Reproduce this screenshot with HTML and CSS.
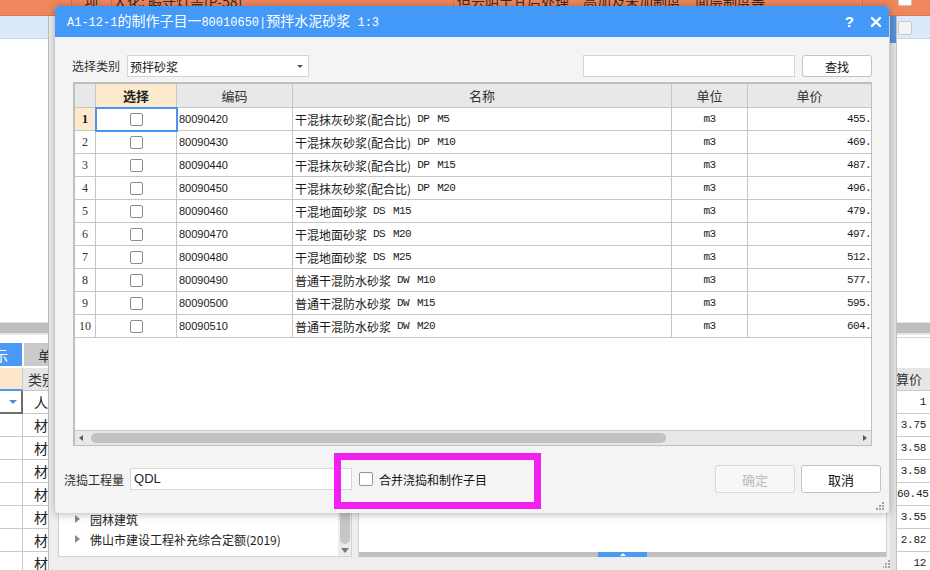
FILE: index.html
```html
<!DOCTYPE html>
<html lang="zh-CN">
<head>
<meta charset="utf-8">
<title>制作子目</title>
<link rel="stylesheet" href="styles.css">
</head>
<body>
<div class="app">
  <div class="pane-left">
    <div class="orow"></div>
    <div class="brow"></div>
    <div class="fill"></div>
    <div class="splitter"></div>
    <div class="gap8"></div>
    <div class="tabs">
      <div class="tab active"><span class="tabtxt cut">示</span></div>
      <div class="tab"><span class="tabtxt">单</span></div>
    </div>
    <div class="gap2"></div>
    <div class="lgrid">
      <div class="lc hsel"></div><div class="lc lhd">类别</div>
      <div class="lc dd"><span class="caret"></span></div><div class="lc">人</div>
      <div class="lc"></div><div class="lc">材</div>
      <div class="lc"></div><div class="lc">材</div>
      <div class="lc"></div><div class="lc">材</div>
      <div class="lc"></div><div class="lc">材</div>
      <div class="lc"></div><div class="lc">材</div>
      <div class="lc"></div><div class="lc">材</div>
      <div class="lc"></div><div class="lc">材</div>
    </div>
  </div>

  <div class="pane-mid">
    <div class="orow">
      <div class="ocell w24"></div>
      <div class="ocell w40 ctr"><span class="otext">项</span></div>
      <div class="ocell w342"><span class="otext">大化: 暇守灯盖(P-58)</span></div>
      <div class="ocell w409"><span class="otext">但云阴土甘后处理　高加及未加制度　面层制度等</span></div>
      <div class="ocell rest"></div>
    </div>
    <div class="mid-body">
      <div class="mfill"></div>
      <div class="mbottom">
        <div class="tree">
          <div class="tree-list">
            <div class="ti"><span class="tri"></span>园林建筑</div>
            <div class="ti"><span class="tri"></span>佛山市建设工程补充综合定额(2019)</div>
          </div>
          <div class="vscroll"><div class="vthumb"></div><div class="varrow"></div></div>
        </div>
        <div class="detail">
          <div class="dfill"></div>
          <div class="hbar"><div class="hbar-blue"><span class="uptri"></span></div></div>
        </div>
      </div>
      <div class="mfoot">
        <svg class="bgrip" width="7" height="8" viewBox="0 0 7 8"><rect x="5" y="0" width="2" height="2" fill="#a8a8a8"/><rect x="2" y="3" width="2" height="2" fill="#a8a8a8"/><rect x="5" y="3" width="2" height="2" fill="#a8a8a8"/><rect x="-1" y="6" width="2" height="2" fill="#a8a8a8"/><rect x="2" y="6" width="2" height="2" fill="#a8a8a8"/><rect x="5" y="6" width="2" height="2" fill="#a8a8a8"/></svg>
      </div>
    </div>
  </div>

  <div class="pane-right">
    <div class="orow rorow"><span class="ocb"></span></div>
    <div class="rbody">
      <div class="rframe"><div class="rblue"></div></div>
      <div class="rcontent">
        <div class="brow rbrow"><span class="rcb"></span></div>
        <div class="fill"></div>
        <div class="splitter"></div>
        <div class="rgap"></div>
        <div class="rgrid">
          <div class="rc rhd">预算价</div>
          <div class="rc">1</div>
          <div class="rc">3.75</div>
          <div class="rc">3.58</div>
          <div class="rc">3.58</div>
          <div class="rc">60.45</div>
          <div class="rc">3.55</div>
          <div class="rc">2.82</div>
          <div class="rc">12</div>
        </div>
      </div>
    </div>
  </div>
</div>

<div class="dialog">
  <div class="titlebar">
    <div class="title"><span class="tl">A1-12-1</span>的制作子目一<span class="tl">80010650|</span>预拌水泥砂浆<span class="tl"> 1:3</span></div>
    <div class="tbtns">
      <span class="help">?</span>
      <svg class="close" width="10" height="10" viewBox="0 0 10 10"><path d="M1 1 L9 9 M9 1 L1 9" stroke="#fff" stroke-width="2.4" stroke-linecap="square"/></svg>
    </div>
  </div>
  <div class="dbody">
    <div class="filter">
      <div class="fgroup">
        <span class="flabel">选择类别</span>
        <div class="select"><span>预拌砂浆</span><i class="sarrow"></i></div>
      </div>
      <div class="fgroup">
        <div class="search"></div>
        <div class="btn find">查找</div>
      </div>
    </div>

    <div class="grid">
      <div class="gtable">
        <div class="gc gh"></div>
        <div class="gc gh hsel2">选择</div>
        <div class="gc gh">编码</div>
        <div class="gc gh">名称</div>
        <div class="gc gh">单位</div>
        <div class="gc gh last">单价</div>

        <div class="gc rn cur">1</div><div class="gc chk selcell"><span class="cb"></span></div><div class="gc code">80090420</div><div class="gc name">干混抹灰砂浆(配合比)<span class="lat">DP M5</span></div><div class="gc unit">m3</div><div class="gc price last">455.</div>
        <div class="gc rn">2</div><div class="gc chk"><span class="cb"></span></div><div class="gc code">80090430</div><div class="gc name">干混抹灰砂浆(配合比)<span class="lat">DP M10</span></div><div class="gc unit">m3</div><div class="gc price last">469.</div>
        <div class="gc rn">3</div><div class="gc chk"><span class="cb"></span></div><div class="gc code">80090440</div><div class="gc name">干混抹灰砂浆(配合比)<span class="lat">DP M15</span></div><div class="gc unit">m3</div><div class="gc price last">487.</div>
        <div class="gc rn">4</div><div class="gc chk"><span class="cb"></span></div><div class="gc code">80090450</div><div class="gc name">干混抹灰砂浆(配合比)<span class="lat">DP M20</span></div><div class="gc unit">m3</div><div class="gc price last">496.</div>
        <div class="gc rn">5</div><div class="gc chk"><span class="cb"></span></div><div class="gc code">80090460</div><div class="gc name">干混地面砂浆<span class="lat">DS M15</span></div><div class="gc unit">m3</div><div class="gc price last">479.</div>
        <div class="gc rn">6</div><div class="gc chk"><span class="cb"></span></div><div class="gc code">80090470</div><div class="gc name">干混地面砂浆<span class="lat">DS M20</span></div><div class="gc unit">m3</div><div class="gc price last">497.</div>
        <div class="gc rn">7</div><div class="gc chk"><span class="cb"></span></div><div class="gc code">80090480</div><div class="gc name">干混地面砂浆<span class="lat">DS M25</span></div><div class="gc unit">m3</div><div class="gc price last">512.</div>
        <div class="gc rn">8</div><div class="gc chk"><span class="cb"></span></div><div class="gc code">80090490</div><div class="gc name">普通干混防水砂浆<span class="lat">DW M10</span></div><div class="gc unit">m3</div><div class="gc price last">577.</div>
        <div class="gc rn">9</div><div class="gc chk"><span class="cb"></span></div><div class="gc code">80090500</div><div class="gc name">普通干混防水砂浆<span class="lat">DW M15</span></div><div class="gc unit">m3</div><div class="gc price last">595.</div>
        <div class="gc rn">10</div><div class="gc chk"><span class="cb"></span></div><div class="gc code">80090510</div><div class="gc name">普通干混防水砂浆<span class="lat">DW M20</span></div><div class="gc unit">m3</div><div class="gc price last">604.</div>
      </div>
      <div class="gempty"></div>
      <div class="hscroll">
        <span class="larr"></span>
        <div class="hthumb"></div>
        <span class="rarr"></span>
      </div>
    </div>

    <div class="footer">
      <span class="qlabel">浇捣工程量</span>
      <div class="qinput">QDL</div>
      <span class="cb lg"></span>
      <span class="cblabel">合并浇捣和制作子目</span>
      <div class="spacer"></div>
      <div class="btn big disabled">确定</div>
      <div class="btn big">取消</div>
    </div>
    <svg class="grip" width="8" height="8" viewBox="0 0 8 8"><rect x="6" y="0" width="2" height="2" fill="#a0a0a0"/><rect x="3" y="3" width="2" height="2" fill="#a0a0a0"/><rect x="6" y="3" width="2" height="2" fill="#a0a0a0"/><rect x="0" y="6" width="2" height="2" fill="#a0a0a0"/><rect x="3" y="6" width="2" height="2" fill="#a0a0a0"/><rect x="6" y="6" width="2" height="2" fill="#a0a0a0"/></svg>
  </div>
</div>

<div class="highlight"></div>
</body>
</html>
```

FILE: styles.css
```css
* { box-sizing: border-box; margin: 0; padding: 0; }
html, body { width: 930px; height: 570px; overflow: hidden; }
body {
  position: relative;
  background: #fff;
  font-family: "Noto Sans CJK SC", "Noto Sans", sans-serif;
  font-size: 12px;
  color: #222;
}

/* ---------- background application ---------- */
.app {
  display: grid;
  grid-template-columns: 48px 842px 40px;
  height: 570px;
}

.orow {
  height: 16px;
  flex: none;
  display: flex;
  overflow: hidden;
  background: #f0865c;
  border-bottom: 1px solid #d9774f;
}
.brow {
  height: 23px;
  flex: none;
  background: #dce9fb;
  border-bottom: 1px solid #c7d3e3;
}
.fill { flex: 1; background: #fff; }
.splitter {
  height: 13px;
  flex: none;
  background: #bfbfbf;
  border-top: 1px solid #e3e3e3;
  border-bottom: 2px solid #e6e6e6;
}

/* left pane */
.pane-left {
  display: flex;
  flex-direction: column;
  overflow: hidden;
  background: #fff;
}
.gap8 { height: 8px; flex: none; }
.gap2 { height: 2px; flex: none; }
.tabs { height: 23px; flex: none; display: flex; gap: 2px; }
.tab {
  width: 22px;
  background: #cacaca;
  display: flex;
  align-items: center;
  overflow: hidden;
  font-size: 14px;
  color: #333;
  white-space: nowrap;
}
.tab + .tab { flex: 1; }
.tab.active { background: #4a9af5; color: #fff; }
.tabtxt { margin-left: 14px; line-height: 16px; }
.tabtxt.cut { margin-left: -6px; }
.lgrid {
  height: 202px;
  flex: none;
  display: grid;
  grid-template-columns: 23px 25px;
  grid-auto-rows: 23px;
  overflow: hidden;
}
.lc {
  border-right: 1px solid #c9c9c9;
  border-bottom: 1px solid #c9c9c9;
  font-size: 14px;
  line-height: 22px;
  padding-left: 11px;
  white-space: nowrap;
  overflow: hidden;
  color: #222;
}
.lc:nth-child(2n) { border-right: none; }
.lc.hsel { background: #fde8cc; border-bottom: 2px solid #4a9af5; }
.lc.lhd { background: #e6e6e6; padding-left: 5px; color: #333; }
.lc.dd {
  border-right: 2px solid #6e6e6e;
  border-bottom: 2px solid #6e6e6e;
  display: flex;
  align-items: center;
  padding-left: 9px;
}
.caret {
  width: 0; height: 0;
  border-left: 4px solid transparent;
  border-right: 4px solid transparent;
  border-top: 4px solid #4a8fd8;
}

/* middle pane */
.pane-mid {
  display: flex;
  flex-direction: column;
  background: #eeeeee;
  overflow: hidden;
}
.ocell {
  flex: none;
  overflow: hidden;
  white-space: nowrap;
  border-right: 1px solid #cf7550;
}
.ocell.w24 { width: 24px; }
.ocell.w40 { width: 40px; }
.ocell.w342 { width: 342px; padding-left: 1px; }
.ocell.w409 { width: 409px; padding-left: 3px; }
.ocell.rest { flex: 1; border-right: none; }
.ocell.ctr { text-align: center; }
.otext {
  display: block;
  font-size: 14px;
  line-height: 14px;
  margin-top: -6px;
  color: #3b2a22;
}
.mid-body {
  flex: 1;
  display: flex;
  flex-direction: column;
  border-left: 1px solid #bcbcbc;
}
.mfill { flex: 1; }
.mbottom {
  height: 77px;
  flex: none;
  display: flex;
  gap: 6px;
  padding-left: 9px;
}
.tree {
  width: 294px;
  display: flex;
  background: #fff;
  border: 1px solid #d2d2d2;
}
.tree-list { flex: 1; padding-top: 28px; }
.ti {
  height: 20px;
  display: flex;
  align-items: center;
  padding-left: 16px;
  font-size: 12px;
  color: #222;
  white-space: nowrap;
}
.tri {
  width: 0; height: 0;
  border-top: 4px solid transparent;
  border-bottom: 4px solid transparent;
  border-left: 5px solid #8a8a8a;
  margin-right: 10px;
}
.vscroll {
  width: 13px;
  background: #ececec;
  display: flex;
  flex-direction: column;
}
.vthumb {
  flex: 1;
  margin: 0 1px 0 2px;
  background: #c6c6c6;
  border-radius: 0 0 5px 5px;
}
.varrow {
  height: 12px;
  flex: none;
  display: flex;
  align-items: center;
  justify-content: center;
}
.varrow::before {
  content: "";
  border-left: 4px solid transparent;
  border-right: 4px solid transparent;
  border-top: 5px solid #777;
}
.detail {
  width: 529px;
  display: flex;
  flex-direction: column;
  background: #fff;
  border: 1px solid #d2d2d2;
  border-bottom: none;
}
.dfill { flex: 1; }
.hbar { height: 5px; flex: none; background: #c0c0c0; display: flex; }
.hbar-blue {
  margin-left: 239px;
  width: 49px;
  background: #4a9af5;
  display: flex;
  justify-content: center;
  align-items: flex-end;
}
.uptri {
  border-left: 3px solid transparent;
  border-right: 3px solid transparent;
  border-bottom: 3px solid #fff;
  margin-bottom: 1px;
}
.mfoot {
  height: 13px;
  flex: none;
  display: flex;
  justify-content: flex-end;
  align-items: center;
}

/* right pane */
.pane-right {
  display: flex;
  flex-direction: column;
  overflow: hidden;
  background: #fff;
}
.rorow { padding-left: 8px; }
.ocb {
  width: 14px;
  height: 14px;
  margin-top: -8px;
  background: #fff;
  border: 1px solid #c8c8c8;
  border-radius: 2px;
}
.rbody { flex: 1; display: flex; }
.rframe {
  width: 7px;
  flex: none;
  background: #e2e2e2;
  border-right: 1px solid #c4c4c4;
}
.rblue { height: 27px; background: #5a8fd6; }
.rcontent { flex: 1; display: flex; flex-direction: column; }
.rbrow { padding: 5px 0 0 1px; }
.rcb {
  display: block;
  width: 14px;
  height: 14px;
  background: #f4f4f4;
  border: 1px solid #c8c8c8;
  border-radius: 2px;
}
.rgap { flex: none; border-top: 1px solid #d6d6d6; margin-top: 2px; height: 31px; }
.rgrid {
  height: 202px;
  flex: none;
  display: grid;
  grid-auto-rows: 23px;
  overflow: hidden;
}
.rc {
  border-bottom: 1px solid #c9c9c9;
  font-family: "Liberation Mono", monospace;
  font-size: 11px;
  letter-spacing: -0.3px;
  line-height: 22px;
  text-align: right;
  padding-right: 4px;
  white-space: nowrap;
  overflow: hidden;
  color: #222;
}
.rc.rhd {
  background: #e6e6e6;
  font-family: "Noto Sans CJK SC", sans-serif;
  font-size: 13px;
  letter-spacing: 0;
  padding-right: 8px;
  display: flex;
  justify-content: flex-end;
  color: #333;
}

/* ---------- dialog ---------- */
.dialog {
  position: absolute;
  left: 55px;
  top: 6px;
  width: 834px;
  height: 507px;
  display: flex;
  flex-direction: column;
  border-radius: 4px;
  box-shadow: 0 1px 8px rgba(0, 0, 0, 0.3);
  background: #f4f4f4;
}
.titlebar {
  height: 31px;
  flex: none;
  display: flex;
  align-items: center;
  justify-content: space-between;
  padding: 0 8px 0 12px;
  background: #4399f8;
  border-radius: 4px 4px 0 0;
  color: #fff;
}
.title { font-size: 14px; line-height: 20px; white-space: nowrap; }
.tl { font-family: "Liberation Mono", monospace; font-size: 12px; }
.tbtns { display: flex; align-items: center; gap: 17px; }
.help {
  font-family: "Liberation Sans", sans-serif;
  font-weight: bold;
  font-size: 15px;
  line-height: 16px;
}
.close { display: block; }

.dbody {
  flex: 1;
  display: flex;
  flex-direction: column;
  position: relative;
  border-radius: 0 0 4px 4px;
}
.filter {
  margin-top: 18px;
  height: 22px;
  flex: none;
  display: flex;
  justify-content: space-between;
  padding: 0 17px;
}
.fgroup { display: flex; align-items: center; gap: 7px; height: 22px; }
.flabel { font-size: 12px; color: #333; line-height: 22px; }
.select {
  width: 182px;
  height: 22px;
  background: #fff;
  border: 1px solid #d4d4d4;
  display: flex;
  align-items: center;
  justify-content: space-between;
  padding: 0 5px 0 2px;
  font-size: 12px;
  color: #111;
}
.sarrow {
  border-left: 3px solid transparent;
  border-right: 3px solid transparent;
  border-top: 3px solid #555;
}
.search {
  width: 212px;
  height: 22px;
  background: #fff;
  border: 1px solid #d4d4d4;
}
.btn {
  display: flex;
  align-items: center;
  justify-content: center;
  background: #fff;
  border: 1px solid #c2c2c2;
  border-radius: 3px;
  font-size: 12px;
  color: #111;
}
.btn.find { width: 70px; height: 22px; }
.btn.big { width: 80px; height: 28px; font-size: 13px; }
.btn.disabled { background: #f7f7f7; border-color: #d8d8d8; color: #bcbcbc; }

/* grid */
.grid {
  margin: 5px 17px 0 18px;
  height: 364px;
  flex: none;
  display: flex;
  flex-direction: column;
  background: #fff;
  border-style: solid;
  border-color: #bfbfbf;
  border-width: 2px 1px 1px 2px;
}
.gtable {
  display: grid;
  grid-template-columns: 21px 81px 116px 379px 76px 123px;
  grid-template-rows: 24px repeat(10, 23px);
  flex: none;
}
.gc {
  border-right: 1px solid #c6c6c6;
  border-bottom: 1px solid #c6c6c6;
  display: flex;
  align-items: center;
  white-space: nowrap;
  overflow: hidden;
  color: #1a1a1a;
}
.gc.last { border-right: none; }
.gc.gh {
  background: #e8e8e8;
  justify-content: center;
  font-size: 13px;
  color: #333;
}
.gc.hsel2 { background: #fde9cc; font-weight: bold; color: #222; }
.gc.rn {
  justify-content: center;
  font-family: "Liberation Serif", serif;
  font-size: 12px;
  color: #333;
}
.gc.rn.cur { background: #fde9cc; font-weight: bold; color: #111; }
.gc.chk { justify-content: center; }
.gc.selcell { outline: 2px solid #4a94f2; outline-offset: -1px; position: relative; z-index: 1; }
.cb {
  display: block;
  width: 13px;
  height: 13px;
  background: #fff;
  border: 1px solid #8c8c8c;
  border-radius: 2px;
}
.gc.code {
  padding-left: 2px;
  font-family: "Liberation Sans", sans-serif;
  font-size: 11px;
}
.gc.name { padding-left: 2px; font-size: 12px; }
.lat {
  font-family: "Liberation Mono", monospace;
  font-size: 11px;
  letter-spacing: -0.6px;
  margin-left: 6px;
  word-spacing: 2px;
}
.gc.unit {
  justify-content: center;
  font-family: "Liberation Mono", monospace;
  font-size: 11px;
  letter-spacing: -0.6px;
}
.gc.price {
  justify-content: flex-end;
  padding-right: 0;
  font-family: "Liberation Mono", monospace;
  font-size: 11px;
  letter-spacing: -0.6px;
}
.gempty { flex: 1; }
.hscroll {
  height: 15px;
  flex: none;
  background: #e8e8e8;
  border-top: 1px solid #c8c8c8;
  display: flex;
  align-items: center;
  padding: 0 4px 0 4px;
}
.larr {
  border-top: 3.5px solid transparent;
  border-bottom: 3.5px solid transparent;
  border-right: 4px solid #5a5a5a;
}
.hthumb {
  width: 575px;
  height: 10px;
  margin-left: 8px;
  background: #c2c2c2;
  border-radius: 5px;
}
.rarr {
  margin-left: auto;
  border-top: 3.5px solid transparent;
  border-bottom: 3.5px solid transparent;
  border-left: 4px solid #5a5a5a;
}

/* footer */
.footer {
  margin-top: 19px;
  height: 28px;
  flex: none;
  display: flex;
  align-items: center;
  padding: 0 8px 0 9px;
}
.qlabel { font-size: 12px; color: #2a2a2a; }
.qinput {
  width: 222px;
  height: 22px;
  margin-left: 6px;
  background: #fff;
  border: 1px solid #d8d8d8;
  padding-left: 3px;
  font-family: "Liberation Sans", sans-serif;
  font-size: 13px;
  line-height: 20px;
  color: #1b2338;
}
.cb.lg {
  width: 14px;
  height: 14px;
  margin-left: 7px;
  border-color: #959595;
}
.cblabel { margin-left: 6px; font-size: 12px; color: #111; }
.spacer { flex: 1; }
.btn.big + .btn.big { margin-left: 6px; }
.grip { position: absolute; right: 5px; bottom: 3px; }

/* annotation overlay */
.highlight {
  position: absolute;
  left: 334px;
  top: 453px;
  width: 207px;
  height: 56px;
  border: 7px solid #f31ff0;
}
```
